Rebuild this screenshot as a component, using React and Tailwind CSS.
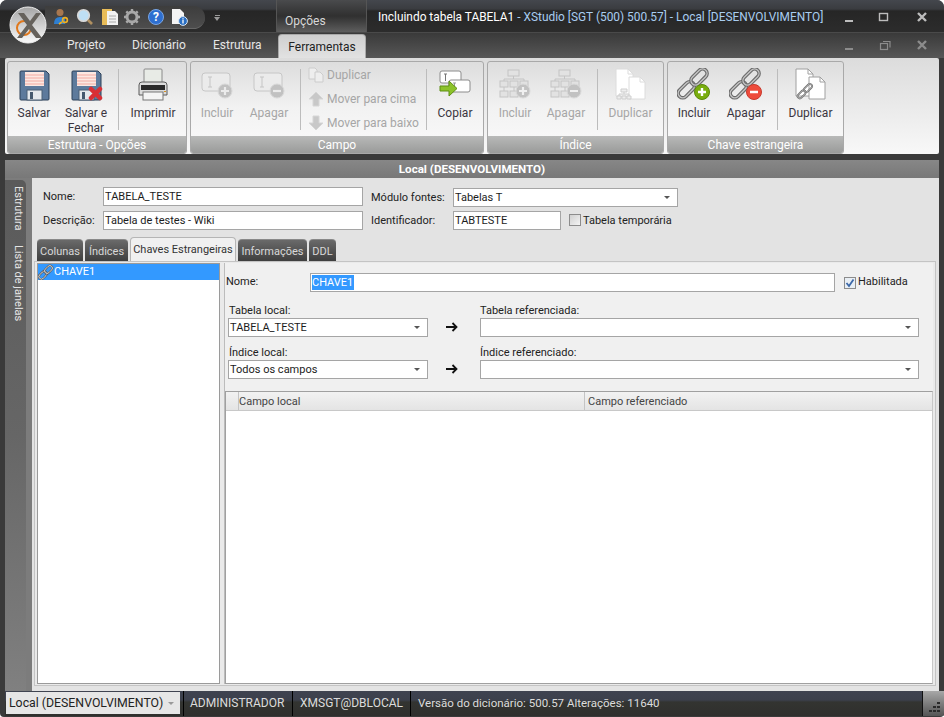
const fontStack = { fontFamily: 'Roboto, "Noto Sans", sans-serif' };

// ---- icons ----
const Floppy = ({ x = false }) => (
  <svg width="34" height="34" viewBox="0 0 34 34">
    <path d="M4 3h25l3 3v25a1 1 0 0 1-1 1H4a1 1 0 0 1-1-1V4a1 1 0 0 1 1-1z" fill="#5d7a9c" stroke="#2c4058" />
    <rect x="8" y="4" width="19" height="14" fill="#fbe8e2" />
    <path d="M8 7h19M8 10h19M8 13h19M8 16h19" stroke="#f2aaa2" />
    <rect x="10" y="22" width="15" height="10" fill="#e4e8ec" stroke="#4b5f75" />
    <rect x="13" y="24" width="3" height="7" fill="#44586e" />
    {x && <path d="M22 21l9 9M31 21l-9 9" stroke="#d92f34" strokeWidth="4.5" strokeLinecap="round" />}
  </svg>
);

const Printer = () => (
  <svg width="34" height="34" viewBox="0 0 34 34">
    <rect x="8" y="1" width="18" height="15" rx="1" fill="#e8ebe6" stroke="#8a8a8a" />
    <path d="M3 17q0-3 3-3h22q3 0 3 3v10H3z" fill="#dcdcdc" stroke="#5a5a5a" />
    <rect x="5" y="17" width="24" height="5" fill="#2a2a2a" />
    <rect x="7" y="24" width="20" height="8" fill="#f4f4f4" stroke="#777" />
    <rect x="28" y="23" width="2" height="1" fill="#d89020" />
  </svg>
);

const FieldIcon = ({ sign }) => (
  <svg width="34" height="34" viewBox="0 0 34 34" className="opacity-90">
    <rect x="2" y="5" width="28" height="18" rx="3" fill="#ececec" stroke="#c4c4c4" />
    <path d="M8 9h4M10 9v10M8 19h4" stroke="#c2c2c2" fill="none" />
    <circle cx="25" cy="23" r="7" fill="#bdbdbd" stroke="#d8d8d8" />
    <path d={sign === 'plus' ? 'M21 23h8M25 19v8' : 'M21 23h8'} stroke="#ececec" strokeWidth="2.2" />
  </svg>
);

const SmallDocs = () => (
  <svg width="16" height="16" viewBox="0 0 16 16">
    <path d="M1 1h6l2 2v9H1z" fill="#eee" stroke="#ccc" />
    <path d="M7 5h5l3 3v7H7z" fill="#eee" stroke="#ccc" />
  </svg>
);

const BlockArrow = ({ down }) => (
  <svg width="16" height="16" viewBox="0 0 16 16">
    <path d={down ? 'M5 1h6v7h4l-7 7-7-7h4z' : 'M8 1l7 7h-4v7H5V8H1z'} fill="#c8c8c8" stroke="#d6d6d6" />
  </svg>
);

const CopyIcon = () => (
  <svg width="34" height="34" viewBox="0 0 34 34">
    <rect x="2" y="3" width="21" height="12" rx="2" fill="#fff" stroke="#8c8c8c" />
    <rect x="11" y="12" width="21" height="12" rx="2" fill="#fff" stroke="#8c8c8c" />
    <path d="M6 6h3M7.5 6v7" stroke="#777" />
    <path d="M15 15h3M16.5 15v7" stroke="#999" />
    <path d="M2 18h9v-5l8 7.5-8 7.5v-5H2z" fill="#8cc22a" stroke="#5f8f14" />
  </svg>
);

const TreeIcon = ({ sign }) => (
  <svg width="34" height="34" viewBox="0 0 34 34">
    <g fill="#e2e2e2" stroke="#c4c4c4">
      <rect x="10" y="2" width="11" height="6" />
      <rect x="2" y="13" width="8" height="6" />
      <rect x="12" y="13" width="8" height="6" />
      <rect x="22" y="13" width="8" height="6" />
      <rect x="2" y="23" width="8" height="6" />
      <rect x="12" y="23" width="8" height="6" />
    </g>
    <path d="M15.5 8v3M6 13v-2h20v2M6 19v4M16 19v4" stroke="#c4c4c4" fill="none" />
    {sign && <circle cx="25" cy="23" r="7" fill="#c2c2c2" stroke="#dadada" />}
    {sign && <path d={sign === 'plus' ? 'M21 23h8M25 19v8' : 'M21 23h8'} stroke="#f0f0f0" strokeWidth="2.2" />}
  </svg>
);

// two links along the diagonal, drawn in a 34 box
const ChainLinks = () => (
  <g fill="none" transform="rotate(-45 16 16)">
    <rect x="-3" y="11.5" width="19" height="9" rx="4.5" stroke="#6a6a6a" strokeWidth="3.6" />
    <rect x="-3" y="11.5" width="19" height="9" rx="4.5" stroke="#c4c4c4" strokeWidth="1.4" />
    <rect x="15" y="11.5" width="19" height="9" rx="4.5" stroke="#6a6a6a" strokeWidth="3.6" />
    <rect x="15" y="11.5" width="19" height="9" rx="4.5" stroke="#c4c4c4" strokeWidth="1.4" />
  </g>
);

const DocPair = ({ chain, tree }) => (
  <svg width="34" height="34" viewBox="0 0 34 34">
    <path d="M2 1h12l5 5v22H2z" fill="#fff" stroke={chain ? '#a0a0a0' : '#dcdcdc'} />
    <path d="M14 1v5h5" fill="none" stroke={chain ? '#a0a0a0' : '#dcdcdc'} />
    <path d="M15 9h11l5 5v17H15z" fill="#fff" stroke={chain ? '#a0a0a0' : '#dcdcdc'} />
    <path d="M26 9v5h5" fill="none" stroke={chain ? '#a0a0a0' : '#dcdcdc'} />
    {chain && <g transform="translate(3 15) scale(0.5)"><ChainLinks /></g>}
    {tree && <path d="M7 21h6v3H7zM3 28h4v3H3zM8 28h4v3H8zM13 28h4v3h-4zM10 24v2M5 28v-2h10v2" fill="#eee" stroke="#cfcfcf" />}
  </svg>
);

const ChainIcon = ({ plus }) => (
  <svg width="34" height="34" viewBox="0 0 34 34">
    <g transform="translate(0 -1)"><ChainLinks /></g>
    <circle cx="25" cy="24" r="7.5" fill={plus ? '#79ad0e' : '#ee4c3c'} stroke={plus ? '#5b8a08' : '#c8382c'} />
    <path d={plus ? 'M21 24h8M25 20v8' : 'M21 24h8'} stroke="#fff" strokeWidth="2.4" />
  </svg>
);

const Logo = () => (
  <svg width="38" height="38" viewBox="0 0 38 38">
    <defs>
      <linearGradient id="logoBg" x1="0" y1="0" x2="0" y2="1">
        <stop offset="0" stopColor="#a6a6a6" />
        <stop offset="0.55" stopColor="#d4d4d4" />
        <stop offset="1" stopColor="#fafafa" />
      </linearGradient>
    </defs>
    <circle cx="19" cy="19" r="18" fill="url(#logoBg)" stroke="#ececec" />
    <circle cx="15" cy="22" r="7" fill="none" stroke="#e0781c" strokeWidth="2" />
    <path d="M9 7h6l6 8 6-8h5l-9 12 10 13h-6l-7-9-7 9H8l10-13z" fill="#66625c" />
  </svg>
);

const QuickIcons = () => (
  <div className="flex items-center">
    <svg width="18" height="18" viewBox="0 0 18 18" className="ml-[7px]">
      <circle cx="8" cy="4.5" r="3.5" fill="#a8774f" />
      <path d="M2 16q0-7 6-7t5 4v3z" fill="#2f7fd0" />
      <circle cx="13" cy="12" r="2.4" fill="none" stroke="#f0b020" strokeWidth="1.6" />
      <path d="M10 14l-3 2" stroke="#f0b020" strokeWidth="1.6" />
    </svg>
    <svg width="18" height="18" viewBox="0 0 18 18" className="ml-[6px]">
      <circle cx="7.5" cy="7.5" r="5.8" fill="#bfe0f5" stroke="#d8d8d8" strokeWidth="1.6" />
      <path d="M12 12l4 4" stroke="#b09060" strokeWidth="2.6" />
    </svg>
    <svg width="18" height="18" viewBox="0 0 18 18" className="ml-[7px]">
      <rect x="1" y="1" width="10" height="16" fill="#e8bc58" />
      <path d="M6 3h8l3 3v11H6z" fill="#f2f2f2" />
      <path d="M8 8h7M8 11h7M8 14h7" stroke="#aaa" />
    </svg>
    <svg width="18" height="18" viewBox="0 0 18 18" className="ml-[4px]">
      <circle cx="9" cy="9" r="5" fill="none" stroke="#a8a8a8" strokeWidth="3" />
      <path d="M9 1v3M9 14v3M1 9h3M14 9h3M3.3 3.3l2 2M12.7 12.7l2 2M14.7 3.3l-2 2M5.3 12.7l-2 2" stroke="#a8a8a8" strokeWidth="2.4" />
    </svg>
    <div className="ml-[7px] w-[16px] h-[16px] rounded-full bg-[#2e6fd0] border border-[#7aa6e4] text-white text-[12px] leading-[14px] text-center font-bold">?</div>
    <svg width="18" height="18" viewBox="0 0 18 18" className="ml-[6px]">
      <path d="M2 1h8l4 4v11H2z" fill="#f4f4f4" />
      <circle cx="13" cy="13" r="4.4" fill="#2a6fc4" stroke="#d8e6f4" />
      <path d="M13 11.6v4M13 10v.8" stroke="#fff" strokeWidth="1.3" />
    </svg>
  </div>
);

const WinButtons = ({ muted }) => {
  const tone = muted ? '#8c8c8c' : '#bdbdbd';
  return (
    <svg width="90" height="12" viewBox="0 0 90 12">
      <rect x="2" y="9" width="8" height="2" fill={tone} />
      {muted ? (
        <g fill="none" stroke={tone}>
          <rect x="37.5" y="4.5" width="7" height="6" strokeWidth="1.2" />
          <path d="M40 2.5h7v6" strokeWidth="1.2" />
        </g>
      ) : (
        <rect x="36.5" y="2.5" width="8" height="7" fill="none" stroke={tone} strokeWidth="1.4" />
      )}
      <path d="M75 2l8 8M83 2l-8 8" stroke={tone} strokeWidth="2.4" />
    </svg>
  );
};

// ---- ribbon ----
const RibbonButton = ({ icon, label, disabled, className }) => (
  <div className={`flex flex-col items-center shrink-0 pt-[6px] ${className}`}>
    <div className="h-[34px] flex items-center justify-center">{icon}</div>
    <div className={`mt-[4px] text-center leading-[15px] text-[12px] whitespace-pre-line ${disabled ? 'text-[#a6a6a6]' : 'text-[#3b3640]'}`}>
      {label}
    </div>
  </div>
);

const Separator = ({ className }) => <div className={`w-px h-[61px] mt-[7px] bg-[#bcbcbc] shrink-0 ${className}`}></div>;

const SmallButton = ({ icon, label }) => (
  <div className="flex items-center gap-[3px] h-[24px] text-[12px] text-[#a6a6a6] whitespace-nowrap">
    {icon}
    <span>{label}</span>
  </div>
);

const RibbonGroup = ({ title, className, children }) => (
  <div className={`h-[93px] flex flex-col shrink-0 rounded-[3px] border border-[#a9a9a9] bg-linear-to-b from-[#dddddd] via-[#f2f2f2] to-[#fafafa] overflow-hidden ${className}`}>
    <div className="flex flex-1">{children}</div>
    <div className="h-[17px] bg-linear-to-b from-[#b8b9b8] to-[#9a9b9a] text-white text-[12px] leading-[18px] text-center">{title}</div>
  </div>
);

// ---- form ----
const TextBox = ({ value, className }) => (
  <div className={`h-[19px] bg-white border border-[#a5a5a5] pl-[1px] text-[11px] leading-[17px] text-[#1c1c1c] whitespace-nowrap overflow-hidden ${className}`}>
    {value}
  </div>
);

const Combo = ({ value, className }) => (
  <div className={`h-[19px] bg-white border border-[#a5a5a5] pl-[1px] pr-[7px] flex items-center justify-between text-[11px] text-[#1c1c1c] ${className}`}>
    <span className="pt-[2px]">{value}</span>
    <span className="w-0 h-0 border-x-[3px] border-x-transparent border-t-[3px] border-t-[#555]"></span>
  </div>
);

const Arrow = () => (
  <svg width="12" height="10" viewBox="0 0 12 10" className="shrink-0">
    <path d="M0 5h10M6.5 1l4 4-4 4" fill="none" stroke="#111" strokeWidth="1.8" />
  </svg>
);

const FormTab = ({ label, active, className }) => (
  <div
    className={`text-[11px] text-center rounded-t-[4px] whitespace-nowrap ${
      active
        ? 'h-[24px] bg-[#f0f0f0] border border-b-0 border-[#b5b5b5] text-[#333] leading-[24px]'
        : 'h-[22px] bg-linear-to-b from-[#6a6a6a] to-[#3f3f3f] text-[#d8d8d8] leading-[24px] border-t border-[#888]'
    } ${className}`}
  >
    {label}
  </div>
);

export default function App() {
  return (
    <div style={fontStack} className="w-[944px] h-[717px] flex flex-col overflow-hidden bg-white">
      <div className="relative w-[944px] h-[717px] flex flex-col rounded-t-[7px] rounded-b-[4px] bg-[#3a3a3a] overflow-hidden">
        {/* title bar */}
        <div className="h-[32px] shrink-0 flex bg-[linear-gradient(#44474d_0px,#3a3c40_9px,#262626_11px,#2c2c2c_32px)]">
          <div className="ml-[45px] mt-[6px] w-[160px] h-[23px] flex items-center rounded-r-[12px] bg-linear-to-b from-[#3d3d3d] to-[#4d4d4d] border-b border-[#666]">
            <QuickIcons />
          </div>
          <div className="ml-[9px] mt-[15px] w-[6px] flex flex-col items-center gap-[1px]">
            <span className="w-[5px] h-px bg-[#9a9a9a]"></span>
            <span className="w-0 h-0 border-x-[3px] border-x-transparent border-t-[4px] border-t-[#9a9a9a]"></span>
          </div>
          <div className="ml-[56px] w-[91px] bg-linear-to-b from-[#4a4b4d] via-[#303030] to-[#5e5e5e] border-x border-[#555] pl-[8px] pt-[12px] text-[12px] leading-[18px] text-[#d8d8d8]">
            Opções
          </div>
          <div className="ml-[11px] pt-[8px] text-[11.9px] leading-[18px] whitespace-nowrap text-[#a9cdf0]">
            <span className="text-white">Incluindo tabela TABELA1</span> - XStudio [SGT (500) 500.57] - Local [DESENVOLVIMENTO]
          </div>
          <div className="ml-auto mr-[11px] mt-[11px]">
            <WinButtons />
          </div>
        </div>

        {/* ribbon tabs */}
        <div className="h-[26px] shrink-0 flex items-end border-t border-[#4a4a4a] bg-linear-to-b from-[#3a3a3a] to-[#575757] text-[12px] text-[#e6e6e6]">
          <div className="w-[38px] ml-[67px] h-[25px] leading-[25px] text-center">Projeto</div>
          <div className="w-[53px] ml-[27px] h-[25px] leading-[25px] text-center">Dicionário</div>
          <div className="w-[47px] ml-[28px] h-[25px] leading-[25px] text-center">Estrutura</div>
          <div className="w-[88px] ml-[18px] h-[24px] leading-[25px] text-center text-[#222] rounded-t-[4px] bg-linear-to-b from-[#cfcfcf] to-[#e2e2e2] border-x border-t border-[#aaa]">
            Ferramentas
          </div>
          <div className="ml-auto mr-[11px] mb-[7px]">
            <WinButtons muted />
          </div>
        </div>

        {/* ribbon */}
        <div className="h-[96px] shrink-0 mx-[5px] pt-[3px] pl-[2px] flex gap-[3px] rounded-[2px] bg-linear-to-b from-[#dcdcdc] to-[#f8f8f8]">
          <RibbonGroup title="Estrutura - Opções" className="w-[180px]">
            <RibbonButton icon={<Floppy />} label="Salvar" className="w-[52px]" />
            <RibbonButton icon={<Floppy x />} label={'Salvar e\nFechar'} className="w-[52px]" />
            <Separator className="ml-[6px]" />
            <RibbonButton icon={<Printer />} label="Imprimir" className="w-[68px]" />
          </RibbonGroup>
          <RibbonGroup title="Campo" className="w-[294px]">
            <RibbonButton icon={<FieldIcon sign="plus" />} label="Incluir" disabled className="w-[52px]" />
            <RibbonButton icon={<FieldIcon sign="minus" />} label="Apagar" disabled className="w-[52px]" />
            <Separator className="ml-[5px]" />
            <div className="w-[125px] shrink-0 pl-[7px] pt-[1px]">
              <SmallButton icon={<SmallDocs />} label="Duplicar" />
              <SmallButton icon={<BlockArrow />} label="Mover para cima" />
              <SmallButton icon={<BlockArrow down />} label="Mover para baixo" />
            </div>
            <Separator />
            <RibbonButton icon={<CopyIcon />} label="Copiar" className="w-[56px]" />
          </RibbonGroup>
          <RibbonGroup title="Índice" className="w-[177px]">
            <RibbonButton icon={<TreeIcon sign="plus" />} label="Incluir" disabled className="w-[54px]" />
            <RibbonButton icon={<TreeIcon sign="minus" />} label="Apagar" disabled className="w-[48px]" />
            <Separator className="ml-[7px]" />
            <RibbonButton icon={<DocPair tree />} label="Duplicar" disabled className="w-[65px]" />
          </RibbonGroup>
          <RibbonGroup title="Chave estrangeira" className="w-[177px]">
            <RibbonButton icon={<ChainIcon plus />} label="Incluir" className="w-[52px]" />
            <RibbonButton icon={<ChainIcon />} label="Apagar" className="w-[52px]" />
            <Separator className="ml-[5px]" />
            <RibbonButton icon={<DocPair chain />} label="Duplicar" className="w-[65px]" />
          </RibbonGroup>
        </div>

        {/* document title */}
        <div className="h-[18px] shrink-0 mx-[5px] mt-[6px] bg-linear-to-b from-[#878787] to-[#787878] text-white text-[11.6px] font-bold leading-[19px] text-center">
          Local (DESENVOLVIMENTO)
        </div>

        {/* document body */}
        <div className="h-[513px] shrink-0 mx-[5px] flex bg-[#e3e3e3]">
          <div className="w-[27px] shrink-0 pt-[2px] bg-[#7c7c7c]">
            <div className="h-[511px] rounded-tr-[5px] bg-linear-to-b from-[#5a5a5a] via-[#666666] to-[#808080] pt-[6px] pl-[6px] text-[11px] leading-[15px] text-[#e4e4e4] [writing-mode:vertical-rl] whitespace-nowrap">
              <span>Estrutura</span>
              <span className="mt-[15px]">Lista de janelas</span>
            </div>
          </div>
          <div className="flex-1 min-w-0 flex flex-col pl-[2px]">
            {/* top fields */}
            <div className="h-[60px] shrink-0 pt-[9px] text-[11px] text-[#222]">
              <div className="flex h-[19px]">
                <label className="w-[69px] pl-[9px] shrink-0 leading-[19px]">Nome:</label>
                <TextBox value="TABELA_TESTE" className="w-[260px] shrink-0" />
                <label className="w-[90px] pl-[8px] shrink-0 leading-[19px] mt-[1px] whitespace-nowrap">Módulo fontes:</label>
                <Combo value="Tabelas T" className="w-[225px] mt-[1px]" />
              </div>
              <div className="flex h-[19px] mt-[5px]">
                <label className="w-[69px] pl-[9px] shrink-0 leading-[19px] whitespace-nowrap">Descrição:</label>
                <TextBox value="Tabela de testes - Wiki" className="w-[260px] shrink-0" />
                <label className="w-[90px] pl-[8px] shrink-0 leading-[19px] whitespace-nowrap">Identificador:</label>
                <TextBox value="TABTESTE" className="w-[108px] shrink-0" />
                <div className="ml-[8px] mt-[3px] w-[12px] h-[12px] border border-[#8c8c8c] bg-linear-to-br from-[#d0d0d0] to-[#f4f4f4]"></div>
                <span className="ml-[2px] leading-[19px] whitespace-nowrap">Tabela temporária</span>
              </div>
            </div>

            {/* tabs */}
            <div className="h-[23px] shrink-0 flex items-end gap-[2px] ml-[3px] relative z-10">
              <FormTab label="Colunas" className="w-[46px]" />
              <FormTab label="Índices" className="w-[43px]" />
              <FormTab label="Chaves Estrangeiras" active className="w-[106px]" />
              <FormTab label="Informações" className="w-[69px]" />
              <FormTab label="DDL" className="w-[27px]" />
            </div>
            <div className="h-[425px] shrink-0 mr-[3px] flex gap-[4px] pt-[1px] pb-[1px] px-[2px] bg-[#eaeaea] border border-[#c4c4c4]">
              {/* key list */}
              <div className="w-[183px] shrink-0 bg-white border border-[#9a9a9a]">
                <div className="h-[16px] flex items-center bg-[#3399ff] text-white text-[11px]">
                  <svg width="16" height="16" viewBox="0 0 16 16" className="shrink-0">
                    <g fill="none" transform="rotate(-45 8 8)">
                      <rect x="-1" y="5.5" width="9" height="5" rx="2.5" stroke="#5a5a5a" strokeWidth="2" />
                      <rect x="-1" y="5.5" width="9" height="5" rx="2.5" stroke="#e8e8e8" strokeWidth="0.8" />
                      <rect x="7" y="5.5" width="9" height="5" rx="2.5" stroke="#5a5a5a" strokeWidth="2" />
                      <rect x="7" y="5.5" width="9" height="5" rx="2.5" stroke="#e8e8e8" strokeWidth="0.8" />
                    </g>
                  </svg>
                  <span>CHAVE1</span>
                </div>
              </div>

              {/* key details */}
              <div className="flex-1 min-w-0 flex flex-col bg-[#f0f0f0] border-l border-[#bcbcbc] text-[11px] text-[#222]">
                <div className="flex items-center h-[19px] mt-[10px]">
                  <label className="w-[85px] pl-px shrink-0">Nome:</label>
                  <div className="w-[525px] h-[19px] shrink-0 bg-white border border-[#a5a5a5] px-[1px] pt-[1px]">
                    <span className="block w-fit h-[15px] leading-[15px] pr-px bg-[#3399ff] text-white">CHAVE1</span>
                  </div>
                  <div className="ml-[9px] w-[12px] h-[12px] border border-[#8c8c8c] bg-[#e8eef4] flex items-center justify-center">
                    <svg width="10" height="10" viewBox="0 0 10 10">
                      <path d="M1.5 5l2.5 3 4.5-6.5" fill="none" stroke="#3c68a8" strokeWidth="1.8" />
                    </svg>
                  </div>
                  <span className="ml-[2px] whitespace-nowrap">Habilitada</span>
                </div>

                <div className="flex mt-[10px] pl-[3px]">
                  <div className="w-[200px] shrink-0">
                    <div className="h-[15px] leading-[18px] pl-px">Tabela local:</div>
                    <Combo value="TABELA_TESTE" className="mt-[1px]" />
                  </div>
                  <div className="w-[52px] shrink-0 flex justify-center items-end pb-[5px] pr-[5px]"><Arrow /></div>
                  <div className="w-[439px] shrink-0">
                    <div className="h-[15px] leading-[18px]">Tabela referenciada:</div>
                    <Combo value="" className="mt-[1px]" />
                  </div>
                </div>
                <div className="flex mt-[7px] pl-[3px]">
                  <div className="w-[200px] shrink-0">
                    <div className="h-[15px] leading-[18px] pl-px">Índice local:</div>
                    <Combo value="Todos os campos" className="mt-[1px]" />
                  </div>
                  <div className="w-[52px] shrink-0 flex justify-center items-end pb-[5px] pr-[5px]"><Arrow /></div>
                  <div className="w-[439px] shrink-0">
                    <div className="h-[15px] leading-[18px]">Índice referenciado:</div>
                    <Combo value="" className="mt-[1px]" />
                  </div>
                </div>

                {/* grid */}
                <div className="flex-1 mt-[12px] min-h-0 bg-white border border-[#a0a0a0] border-r-[#c8c8c8]">
                  <div className="h-[19px] flex bg-linear-to-b from-[#f2f2f2] to-[#e4e4e4] border-b border-[#c8c8c8] text-[#444] leading-[19px]">
                    <div className="w-[13px] shrink-0 border-r border-[#c4c4c4]"></div>
                    <div className="w-[346px] shrink-0 border-r border-[#c4c4c4]">Campo local</div>
                    <div className="flex-1 pl-[3px]">Campo referenciado</div>
                  </div>
                </div>
              </div>
            </div>
          </div>
        </div>

        {/* status bar */}
        <div className="h-[25px] shrink-0 ml-[5px] flex text-[12px] leading-[25px] text-[#dcdcdc] bg-[linear-gradient(#3f4350_0px,#3c404c_9px,#333431_11px,#2f2f2d_25px)] whitespace-nowrap">
          <div className="w-[174px] h-[22px] mt-[1px] ml-[1px] shrink-0 flex items-center justify-between pl-[3px] pr-[6px] bg-[#e6e6e6] text-[#222] text-[12.3px]">
            <span>Local (DESENVOLVIMENTO)</span>
            <span className="w-0 h-0 border-x-[3px] border-x-transparent border-t-[3px] border-t-[#999]"></span>
          </div>
          <div className="w-[109px] ml-[3px] shrink-0 border-l border-black pl-[6px] text-[12px]">ADMINISTRADOR</div>
          <div className="w-[118px] shrink-0 border-l border-black pl-[7px] text-[12px]">XMSGT@DBLOCAL</div>
          <div className="flex-1 border-l border-black pl-[7px] text-[11.5px]">Versão do dicionário: 500.57 Alterações: 11640</div>
          <div className="w-[22px] shrink-0 h-[25px] border-l border-[#111] bg-linear-to-b from-[#a8a8a8] to-[#555] flex items-end justify-end pr-[4px] pb-[3px]">
            <svg width="11" height="11" viewBox="0 0 11 11">
              <path d="M8 0h3v2H8zM4 4h3v2H4zM8 4h3v2H8zM0 8h3v2H0zM4 8h3v2H4zM8 8h3v2H8z" fill="#2a2a2a" />
            </svg>
          </div>
        </div>

        {/* application button, sits over title bar and tab row */}
        <div className="absolute left-[9px] top-[6px]">
          <Logo />
        </div>
      </div>
    </div>
  );
}
